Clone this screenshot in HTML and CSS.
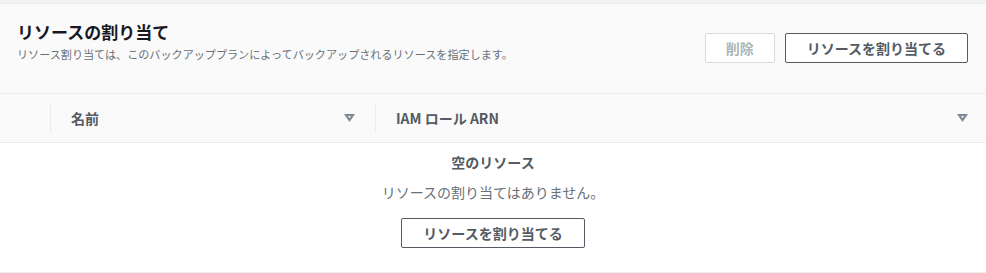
FILE: index.html
```html
<!DOCTYPE html>
<html lang="ja">
<head>
    <meta charset="UTF-8">
    <meta name="viewport" content="width=device-width, initial-scale=1.0">
    <title>リソースの割り当て</title>
    <link rel="stylesheet" href="styles.css">
</head>
<body>
    <div class="panel">
        <!-- Panel header -->
        <div class="panel-header">
            <div class="heading">
                <h2>リソースの割り当て</h2>
                <p>リソース割り当ては、このバックアッププランによってバックアップされるリソースを指定します。</p>
            </div>
            <div class="actions">
                <button class="btn" disabled>削除</button>
                <button class="btn">リソースを割り当てる</button>
            </div>
        </div>

        <!-- Table header -->
        <div class="table-head">
            <div class="th th-select"></div>
            <div class="th">
                <div class="th-inner">
                    <span>名前</span>
                    <svg class="sort-icon" width="11" height="8" viewBox="0 0 11 8"><path fill-rule="evenodd" d="M0 0H11L5.5 8Z M4 2H7L5.5 4.3Z"/></svg>
                </div>
            </div>
            <div class="th">
                <div class="th-inner">
                    <span>IAM ロール ARN</span>
                    <svg class="sort-icon" width="11" height="8" viewBox="0 0 11 8"><path fill-rule="evenodd" d="M0 0H11L5.5 8Z M4 2H7L5.5 4.3Z"/></svg>
                </div>
            </div>
        </div>

        <!-- Empty state -->
        <div class="empty">
            <div class="empty-title">空のリソース</div>
            <p class="empty-text">リソースの割り当てはありません。</p>
            <button class="btn">リソースを割り当てる</button>
        </div>
    </div>
</body>
</html>
```

FILE: styles.css
```css
body {
    font-family: "Noto Sans CJK JP", "Noto Sans", sans-serif;
    background-color: #f2f3f3;
    margin: 0;
    padding: 3px 0 0;
    color: #16191f;
}
.panel {
    background-color: #fff;
    border-top: 1px solid #eaeded;
    border-bottom: 1px solid #eaeded;
}

/* Panel header */
.panel-header {
    display: flex;
    justify-content: space-between;
    align-items: flex-start;
    box-sizing: border-box;
    height: 90px;
    padding: 17px 18px 0 17px;
    background-color: #fafafa;
    border-bottom: 1px solid #eaeded;
}
.heading h2 {
    margin: 0;
    font-size: 17px;
    line-height: 22px;
    font-weight: bold;
}
.heading p {
    margin: 2px 0 0;
    font-size: 11.1px;
    line-height: 18px;
    color: #687078;
}
.actions {
    display: flex;
    gap: 10px;
    margin-top: 12px;
}

/* Buttons */
.btn {
    font-family: inherit;
    font-size: 14px;
    font-weight: bold;
    line-height: 18px;
    color: #545b64;
    background-color: #fff;
    border: 1px solid #545b64;
    border-radius: 2px;
    padding: 5px 21px;
    cursor: pointer;
}
.btn:disabled {
    padding: 5px 20px;
    color: #aab7b8;
    border-color: #d5dbdb;
    cursor: default;
}

/* Table header */
.table-head {
    display: grid;
    grid-template-columns: 50px 325px 1fr;
    height: 48px;
    background-color: #fafafa;
    border-bottom: 1px solid #eaeded;
}
.th {
    display: flex;
    align-items: center;
}
.th-inner {
    flex: 1;
    display: flex;
    align-items: center;
    justify-content: space-between;
    height: 30px;
    padding: 0 20px;
    border-left: 1px solid #eaeded;
    font-size: 14px;
    font-weight: bold;
    color: #545b64;
}
.th:last-child .th-inner {
    padding-right: 18px;
}
.sort-icon {
    fill: #7d8998;
}

/* Empty state */
.empty {
    display: flex;
    flex-direction: column;
    align-items: center;
    padding: 9px 0 24px;
}
.empty-title {
    font-size: 14px;
    font-weight: bold;
    line-height: 20px;
    color: #545b64;
}
.empty-text {
    margin: 10px 0 16px;
    font-size: 14px;
    line-height: 20px;
    color: #687078;
}
```
